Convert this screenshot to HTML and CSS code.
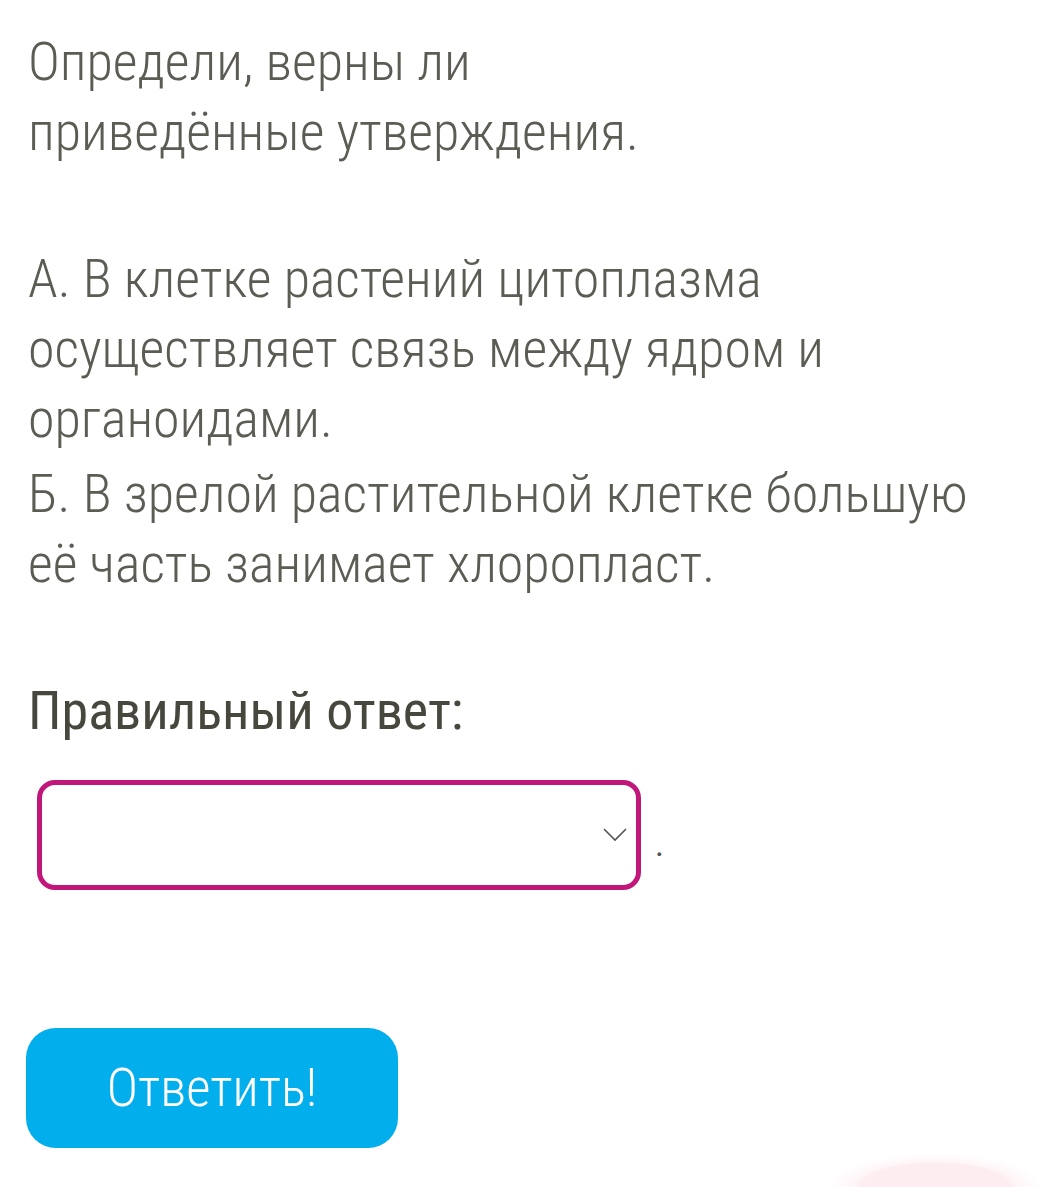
FILE: index.html
```html
<!DOCTYPE html>
<html lang="ru">
<head>
    <meta charset="UTF-8">
    <meta name="viewport" content="width=device-width, initial-scale=1.0">
    <title>Вопрос</title>
    <link rel="stylesheet" href="styles.css">
</head>
<body>
    <div class="task">
        <p class="question">Определи, верны ли<br>приведённые утверждения.</p>
        <p class="statement first">А. В клетке растений цитоплазма<br>осуществляет связь между ядром и<br>органоидами.</p>
        <p class="statement">Б. В зрелой растительной клетке большую<br>её часть занимает хлоропласт.</p>

        <h2 class="answer-title">Правильный ответ:</h2>
        <div class="answer-row">
            <div class="select">
                <svg class="chevron" width="24" height="14" viewBox="0 0 24 14">
                    <path d="M1 1 L12 12 L23 1" fill="none" stroke="#555" stroke-width="1.6"/>
                </svg>
            </div>
            <span class="dot">.</span>
        </div>

        <button class="btn" type="button">Ответить!</button>
    </div>
    <div class="blob"></div>
</body>
</html>
```

FILE: styles.css
```css
body {
    margin: 0;
    padding: 0;
    background: #fff;
    font-family: "Roboto Condensed", Roboto, sans-serif;
    color: #4b4b43;
    overflow: hidden;
    height: 1187px;
    position: relative;
}
.task {
    padding: 27px 0 0 28px;
}
p {
    margin: 0;
    font-size: 54px;
    font-weight: 300;
    line-height: 70px;
    white-space: nowrap;
    color: #5c5c54;
}
.statement.first {
    margin-top: 77px;
}
.statement {
    margin-top: 5px;
}
.answer-title {
    margin: 77px 0 0;
    font-size: 54px;
    font-weight: 400;
    line-height: 70px;
    color: #47473d;
}
.answer-row {
    display: flex;
    align-items: center;
    margin: 34px 0 0 9px;
}
.select {
    box-sizing: border-box;
    width: 604px;
    height: 110px;
    border: 5px solid #c2177a;
    border-radius: 18px;
    display: flex;
    align-items: center;
    justify-content: flex-end;
    padding-right: 9px;
}
.dot {
    font-size: 34px;
    color: #555;
    margin-left: 14px;
    margin-top: 18px;
}
.btn {
    display: block;
    margin-top: 138px;
    margin-left: -2px;
    width: 372px;
    height: 120px;
    border: none;
    border-radius: 30px;
    background: #03aeec;
    color: #fff;
    font-family: inherit;
    font-size: 53px;
    font-weight: 300;
}
.blob {
    position: absolute;
    left: 820px;
    bottom: 0;
    width: 230px;
    height: 40px;
    background: radial-gradient(ellipse 82px 26px at 50% 100%, #fdedf0 0, #fdedf0 90%, #fff6f8 100%, #fff 130%);
}
```
